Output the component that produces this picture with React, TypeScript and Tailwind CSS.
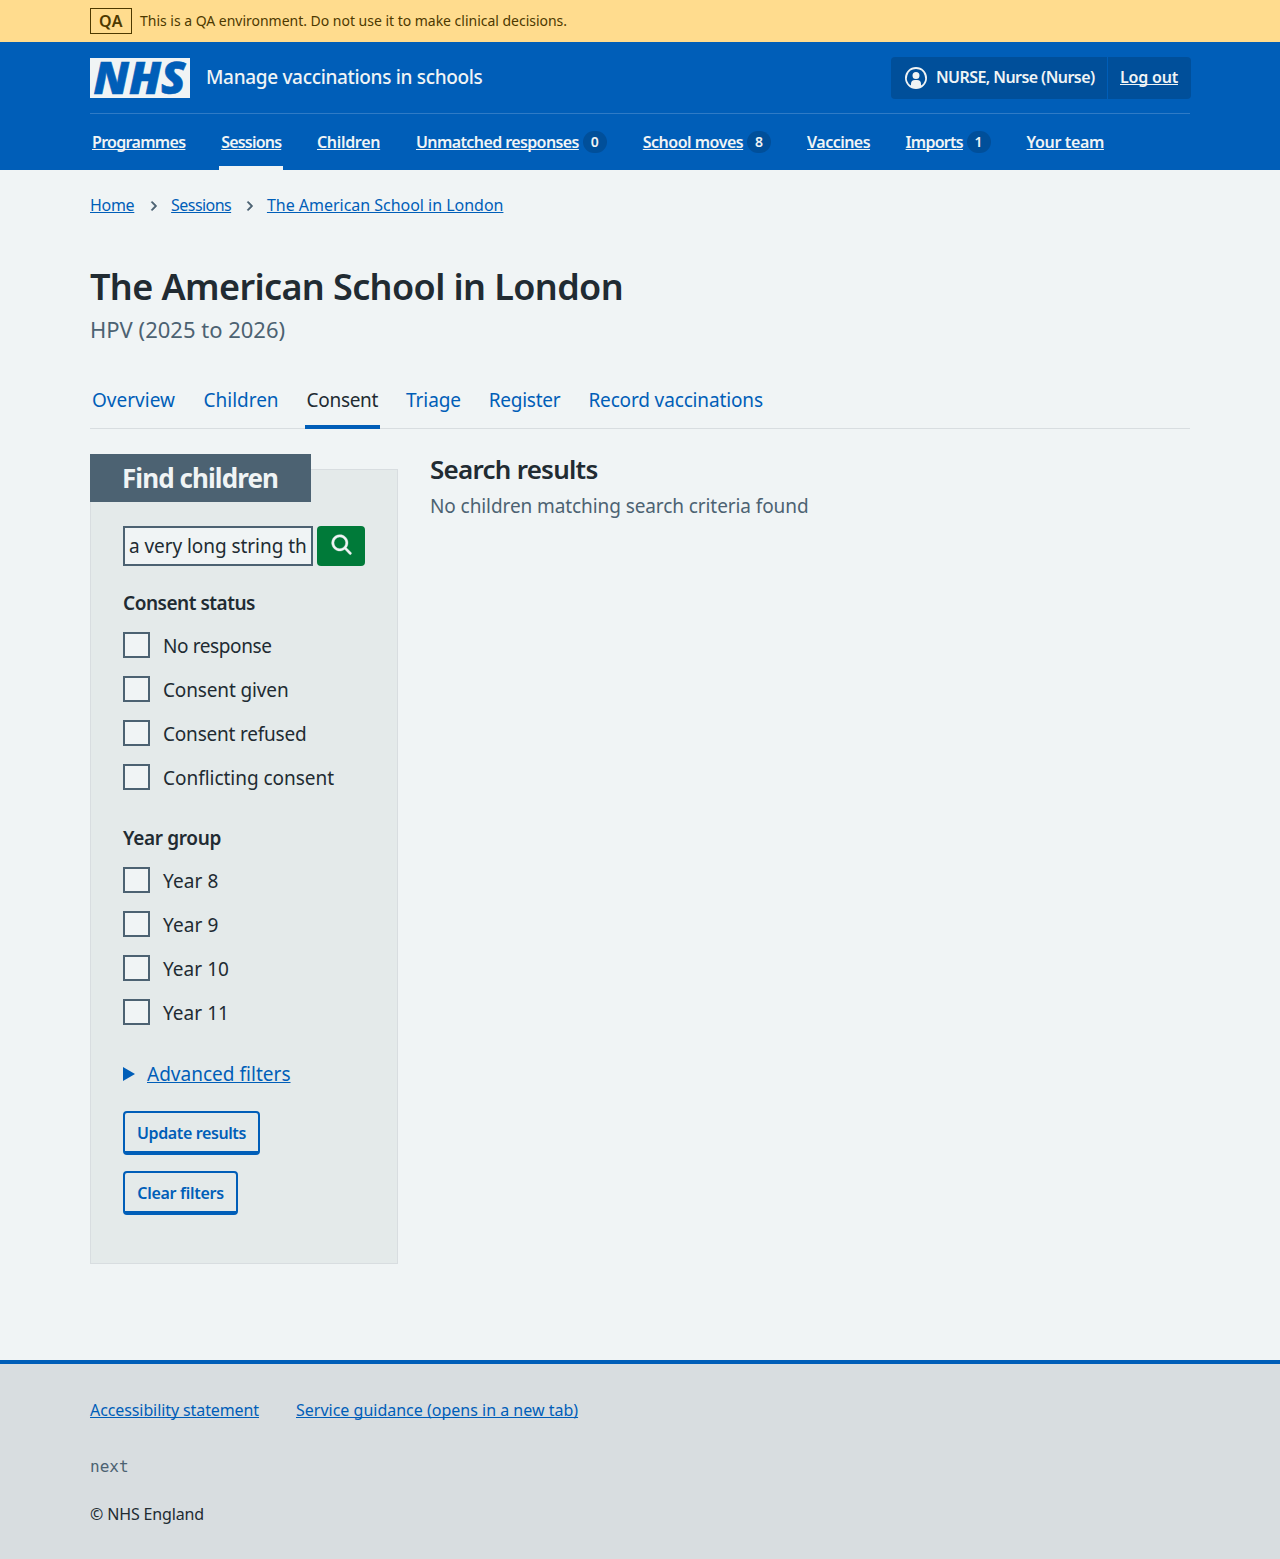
import { clsx } from "clsx";

type NavItem = { label: string; width: string; tracking: string; badge?: string; current?: boolean };

const navItems: NavItem[] = [
  { label: "Programmes", width: "w-[93.2px]", tracking: "tracking-[-0.69px]" },
  { label: "Sessions", width: "w-[59.8px]", tracking: "tracking-[-0.8px]", current: true },
  { label: "Children", width: "w-[63px]", tracking: "tracking-[-0.32px]" },
  { label: "Unmatched responses", width: "w-[162.8px]", tracking: "tracking-[-0.6px]", badge: "0" },
  { label: "School moves", width: "w-[100.3px]", tracking: "tracking-[-0.5px]", badge: "8" },
  { label: "Vaccines", width: "w-[62.5px]", tracking: "tracking-[-0.53px]" },
  { label: "Imports", width: "w-[57px]", tracking: "tracking-[-0.74px]", badge: "1" },
  { label: "Your team", width: "w-[77.4px]", tracking: "tracking-[-0.36px]" },
];

const tabs = [
  { label: "Overview", width: "w-[83.6px]", tracking: "tracking-[0.015px]" },
  { label: "Children", width: "w-[75px]", tracking: "tracking-[-0.021px]" },
  { label: "Consent", width: "w-[71.4px]", tracking: "tracking-[-0.309px]", current: true },
  { label: "Triage", width: "w-[54.8px]", tracking: "tracking-[-0.071px]" },
  { label: "Register", width: "w-[71.6px]", tracking: "tracking-[-0.268px]" },
  { label: "Record vaccinations", width: "w-[176px]", tracking: "tracking-[-0.142px]" },
];

const consentOptions = [
  { label: "No response", tracking: "tracking-[-0.4px]" },
  { label: "Consent given", tracking: "tracking-[-0.138px]" },
  { label: "Consent refused", tracking: "tracking-[-0.204px]" },
  { label: "Conflicting consent", tracking: "tracking-[-0.032px]" },
];

const yearOptions = [
  { label: "Year 8", tracking: "tracking-[0.1px]" },
  { label: "Year 9", tracking: "tracking-[0.1px]" },
  { label: "Year 10", tracking: "tracking-[0.04px]" },
  { label: "Year 11", tracking: "tracking-[0.04px]" },
];

function Logo() {
  return (
    <svg width="100" height="40" viewBox="0 0 100 40" role="img" aria-label="NHS" className="block overflow-visible">
      <rect width="100" height="40" fill="#f0f4f5" />
      <text
        x="3.5"
        y="36"
        textLength="92"
        lengthAdjust="spacingAndGlyphs"
        fontFamily="Open Sans, sans-serif"
        fontSize="44.5"
        fontWeight="800"
        fontStyle="italic"
        fill="#005eb8"
        stroke="#005eb8"
        strokeWidth="0.6"
      >
        NHS
      </text>
    </svg>
  );
}

function Chevron() {
  return (
    <svg width="18" height="18" viewBox="0 0 24 24" className="block" aria-hidden="true">
      <path
        fill="#4c6272"
        stroke="#4c6272"
        strokeWidth="0.8"
        d="M15.5 12a1 1 0 0 1-.29.71l-5 5a1 1 0 0 1-1.42-1.42l4.3-4.29-4.3-4.29a1 1 0 0 1 1.42-1.42l5 5a1 1 0 0 1 .29.71z"
      />
    </svg>
  );
}

function Badge({ value }: { value: string }) {
  return (
    <span className="ml-1 flex h-[22px] w-6 items-center justify-center rounded-full bg-[#004f9a] text-[14px] leading-[22px] font-semibold">
      {value}
    </span>
  );
}

function CheckboxGroup({ legend, legendTracking, options }: { legend: string; legendTracking: string; options: { label: string; tracking: string }[] }) {
  return (
    <fieldset>
      <legend className={clsx("block h-7 text-[19px] leading-7 font-semibold whitespace-nowrap", legendTracking)}>{legend}</legend>
      <div className="mt-[15px] flex flex-col gap-[17px]">
        {options.map((o) => (
          <label key={o.label} className="flex h-[27px] items-start">
            <span className="block h-[26px] w-[27px] border-2 border-[#4c6272] bg-[#f0f4f5]" />
            <span className={clsx("ml-[13px] text-[19px] leading-7 whitespace-nowrap", o.tracking)}>{o.label}</span>
          </label>
        ))}
      </div>
    </fieldset>
  );
}

const link = "text-[#005eb8] underline decoration-1 underline-offset-[1px] [text-decoration-skip-ink:none] whitespace-nowrap";
const secondaryButton =
  "flex h-11 items-center justify-center rounded border-2 border-b-4 border-[#005eb8] pt-px text-[16px] font-semibold text-[#005eb8] whitespace-nowrap";

export default function App() {
  return (
    <div className="flex min-h-[1559px] flex-col bg-[#f0f4f5] font-['Noto_Sans',sans-serif] text-[#212b32]">
      <div className="h-[42px] bg-[#ffdc8e] text-[#4d3900]">
        <div className="mx-auto flex h-full w-[1100px] items-center">
          <strong className="flex h-[26px] w-[42px] items-center justify-center border border-[#4d3900] text-[16px] leading-6 font-semibold tracking-[0.5px]">
            QA
          </strong>
          <span className="mb-px ml-2 text-[14px] leading-5 tracking-[-0.019px] whitespace-nowrap">
            This is a QA environment. Do not use it to make clinical decisions.
          </span>
        </div>
      </div>

      <header className="h-32 bg-[#005eb8] text-[#f0f4f5]">
        <div className="mx-auto flex h-full w-[1100px] flex-col">
          <div className="flex h-[71px] items-center">
            <Logo />
            <span className="ml-4 text-[19px] font-medium tracking-[-0.327px] whitespace-nowrap">Manage vaccinations in schools</span>
            <div className="-mr-px ml-auto flex h-[42px] w-[300px] rounded bg-[#004f9a] text-[16px] leading-[41px] font-semibold whitespace-nowrap">
              <div className="flex w-[217px] items-center border-r border-[#005eb8] pl-[13px]">
                <svg width="24" height="24" viewBox="0 0 24 24" fill="#f0f4f5" aria-hidden="true">
                  <path d="M12 1a11 11 0 1 1 0 22 11 11 0 0 1 0-22Zm0 2a9 9 0 0 0-5 16.5V18a4 4 0 0 1 4-4h2a4 4 0 0 1 4 4v1.5A9 9 0 0 0 12 3Zm0 3a3.5 3.5 0 1 1 0 7 3.5 3.5 0 0 1 0-7Z" />
                </svg>
                <span className="ml-2 tracking-[-0.57px]">NURSE, Nurse (Nurse)</span>
              </div>
              <a className="ml-3 tracking-[-0.2px] underline decoration-1 underline-offset-[1px] [text-decoration-skip-ink:none]">Log out</a>
            </div>
          </div>
          <nav className="flex h-[57px] border-t border-[#2f7bc6] text-[16px] font-semibold">
            {navItems.map((n, i) => (
              <div
                key={n.label}
                className={clsx("flex items-center px-[2px]", i > 0 && "ml-8", n.current ? "border-b-4 border-[#f0f4f5] pt-1" : "")}
              >
                <a
                  className={clsx(
                    "mb-px block leading-6 whitespace-nowrap underline decoration-1 underline-offset-[1px] [text-decoration-skip-ink:none]",
                    n.width,
                    n.tracking,
                  )}
                >
                  {n.label}
                </a>
                {n.badge && <Badge value={n.badge} />}
              </div>
            ))}
          </nav>
        </div>
      </header>

      <main className="mx-auto w-[1100px] grow">
        <nav className="mt-[23px] flex h-6 items-center text-[16px] leading-6">
          <a className={clsx(link, "tracking-[-0.305px]")}>Home</a>
          <span className="mt-px mr-[8px] ml-[10.8px]"><Chevron /></span>
          <a className={clsx(link, "tracking-[-0.562px]")}>Sessions</a>
          <span className="mt-px mr-[7.5px] ml-[10.3px]"><Chevron /></span>
          <a className={clsx(link, "tracking-[-0.022px]")}>The American School in London</a>
        </nav>

        <h1 className="mt-[46px] text-[36px] leading-[48px] font-semibold tracking-[-0.615px]">The American School in London</h1>
        <p className="mt-[2px] text-[22px] leading-8 text-[#4c6272]">HPV (2025 to 2026)</p>

        <nav className="mt-[26px] flex h-[58px] border-b border-[#d8dde0] text-[19px]">
          {tabs.map((t, i) => (
            <div
              key={t.label}
              className={clsx(
                "-mb-px box-border h-[58px] px-[2px] pt-[15px] leading-7",
                i > 0 && "ml-6",
                t.current ? "border-b-4 border-[#005eb8] text-[#212b32]" : "text-[#005eb8]",
              )}
            >
              <a className={clsx("block whitespace-nowrap", t.width, t.tracking)}>{t.label}</a>
            </div>
          ))}
        </nav>

        <div className="mt-[25px] flex items-start gap-8">
          <section className="mt-[15px] h-[795px] w-[308px] border border-[#d8dde0] bg-[#e4eaea] px-8">
            <h2 className="-mt-4 -ml-[33px] flex h-12 w-[221px] items-center bg-[#4c6272] pb-px pl-8 text-[26px] leading-8 font-bold tracking-[-0.92px] whitespace-nowrap text-[#f0f4f5]">
              Find children
            </h2>
            <div className="mt-6 flex gap-1">
              <input
                type="text"
                defaultValue="a very long string th"
                className="h-10 w-[190px] rounded-none border-2 border-[#4c6272] bg-[#f0f4f5] px-1 text-[19px] tracking-[-0.06px]"
              />
              <button aria-label="Search" className="h-10 w-[47.5px] rounded bg-[#007a39] pl-[10px]">
                <svg width="28" height="28" viewBox="0 0 24 24" fill="#f0f4f5" stroke="#f0f4f5" strokeWidth="0.3" className="mb-1 block">
                  <path d="m20.7 19.3-4.1-4.1a7 7 0 1 0-1.4 1.4l4 4.1a1 1 0 0 0 1.5 0c.4-.4.4-1 0-1.4ZM6 11a5 5 0 1 1 10 0 5 5 0 0 1-10 0Z" />
                </svg>
              </button>
            </div>
            <div className="mt-[23px] flex flex-col gap-[33px]">
              <CheckboxGroup legend="Consent status" legendTracking="tracking-[-0.473px]" options={consentOptions} />
              <CheckboxGroup legend="Year group" legendTracking="tracking-[-0.342px]" options={yearOptions} />
            </div>
            <div className="mt-[34px] flex h-7 items-center text-[19px] leading-7">
              <svg width="12" height="14" viewBox="0 0 12 14" aria-hidden="true">
                <path d="M0 0 12 7 0 14Z" fill="#005eb8" />
              </svg>
              <a className={clsx(link, "ml-3 tracking-[0.019px]")}>Advanced filters</a>
            </div>
            <button className={clsx(secondaryButton, "mt-[23px] w-[137px] tracking-[-0.382px]")}>Update results</button>
            <button className={clsx(secondaryButton, "mt-4 w-[115px] tracking-[-0.288px]")}>Clear filters</button>
          </section>

          <section>
            <h2 className="-mt-px text-[26px] leading-[32px] font-semibold tracking-[-0.75px]">Search results</h2>
            <p className="mt-[7px] text-[19px] leading-7 tracking-[-0.089px] text-[#4c6272]">No children matching search criteria found</p>
          </section>
        </div>
      </main>

      <footer className="h-[199px] border-t-4 border-[#005eb8] bg-[#d8dde0] text-[16px] leading-6">
        <div className="mx-auto w-[1100px] pt-[34px]">
          <div className="flex gap-[37px]">
            <a className={clsx(link, "tracking-[-0.098px]")}>Accessibility statement</a>
            <a className={link}>Service guidance (opens in a new tab)</a>
          </div>
          <p className="mt-[33px] font-['DejaVu_Sans_Mono',monospace] text-[16px] text-[#4c6272]">next</p>
          <p className="mt-[23px] tracking-[-0.145px]">© NHS England</p>
        </div>
      </footer>
    </div>
  );
}
